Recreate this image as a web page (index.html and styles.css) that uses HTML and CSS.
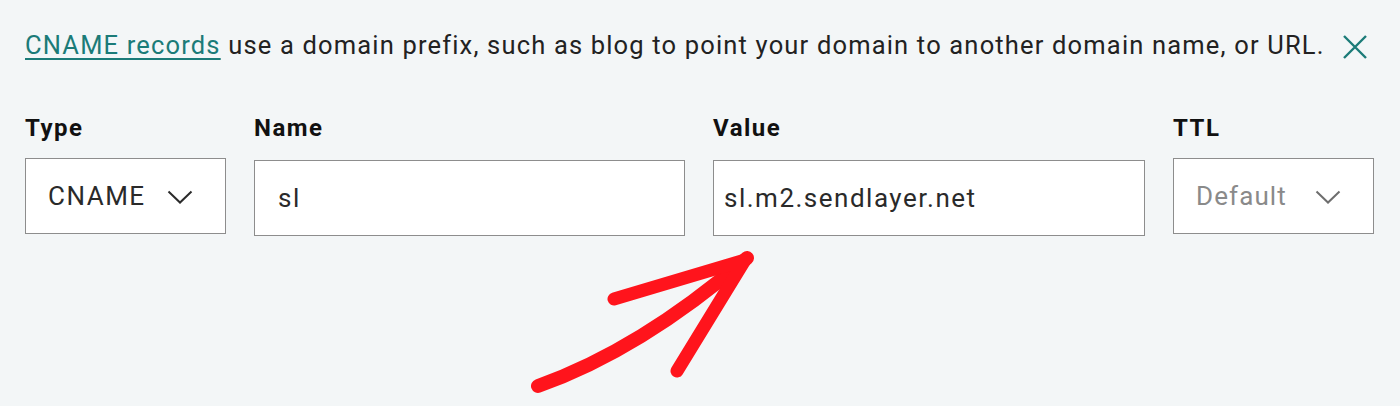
FILE: index.html
```html
<!DOCTYPE html>
<html>
<head>
<meta charset="utf-8">
<link rel="stylesheet" href="styles.css">
</head>
<body>
<div class="page">
  <div class="notice">
    <p class="notice-text"><a class="notice-link" href="#">CNAME records</a> use a domain prefix, such as blog to point your domain to another domain name, or URL.</p>
    <button class="close" aria-label="Close">
      <svg width="26" height="26" viewBox="0 0 26 26"><path d="M2 2 L24 24 M24 2 L2 24" stroke="#1b7b78" stroke-width="2.4" fill="none"/></svg>
    </button>
  </div>
  <div class="fields">
    <div class="field f-type">
      <label class="label">Type</label>
      <div class="box select">
        <span class="val">CNAME</span>
        <svg class="chev" width="26" height="14" viewBox="0 0 26 14"><path d="M1.5 1.5 L13 12.5 L24.5 1.5" stroke="#2b2b2b" stroke-width="2" fill="none"/></svg>
      </div>
    </div>
    <div class="field f-name">
      <label class="label">Name</label>
      <div class="box input"><span class="val">sl</span></div>
    </div>
    <div class="field f-value">
      <label class="label">Value</label>
      <div class="box input"><span class="val">sl.m2.sendlayer.net</span></div>
    </div>
    <div class="field f-ttl">
      <label class="label">TTL</label>
      <div class="box select">
        <span class="val muted">Default</span>
        <svg class="chev" width="26" height="14" viewBox="0 0 26 14"><path d="M1.5 1.5 L13 12.5 L24.5 1.5" stroke="#6e6e6e" stroke-width="2" fill="none"/></svg>
      </div>
    </div>
  </div>
</div>
<svg class="arrow" width="1400" height="406" viewBox="0 0 1400 406">
  <path d="M538 386 Q640 350 747 258" stroke="#ff141c" stroke-width="14" fill="none" stroke-linecap="round" stroke-linejoin="round"/>
  <path d="M614 299 L745 260 L677 371" stroke="#ff141c" stroke-width="13" fill="none" stroke-linecap="round" stroke-linejoin="round"/>
</svg>
</body>
</html>
```
FILE: styles.css
```css
html, body {
  margin: 0;
  padding: 0;
}
body {
  background: #f3f6f7;
  width: 1400px;
  height: 406px;
  overflow: hidden;
  font-family: Roboto, "Liberation Sans", sans-serif;
  color: #1f1f1f;
  position: relative;
}
.page {
  padding: 30px 24px 0 25px;
}
.notice {
  display: flex;
  align-items: center;
  justify-content: space-between;
  height: 30px;
}
.notice-text {
  margin: 0;
  font-size: 25.5px;
  line-height: 30px;
  color: #222;
  letter-spacing: 1.17px;
}
.notice-link {
  color: #1b7b78;
  text-decoration: underline;
  text-underline-offset: 4px;
  text-decoration-thickness: 2px;
}
.close {
  border: 0;
  background: none;
  padding: 0;
  width: 26px;
  height: 26px;
  display: flex;
  margin-right: 8px;
  margin-top: 4px;
}
.fields {
  display: flex;
  gap: 28px;
  margin-top: 54px;
}
.field {
  display: flex;
  flex-direction: column;
}
.f-type, .f-ttl { width: 201px; }
.f-name { width: 431px; }
.f-value { width: 432px; }
.label {
  font-weight: 700;
  font-size: 24px;
  line-height: 28px;
  letter-spacing: 1.5px;
  color: #111;
  height: 44px;
}
.box {
  box-sizing: border-box;
  height: 76px;
  background: #fff;
  border: 1.5px solid #8d8d8d;
  display: flex;
  align-items: center;
  font-size: 26px;
  letter-spacing: 1.5px;
  color: #2a2a2a;
}
.f-name .box, .f-value .box {
  margin-top: 2px;
}
.select {
  justify-content: space-between;
  padding: 0 32px 0 22px;
}
.input {
  padding: 0 23px;
}
.f-value .input { padding-left: 10px; }
.muted {
  color: #8a8a8a;
  letter-spacing: 1.1px;
}
.chev {
  display: block;
  margin-top: 2px;
}
.arrow {
  position: absolute;
  left: 0;
  top: 0;
  pointer-events: none;
}
```
